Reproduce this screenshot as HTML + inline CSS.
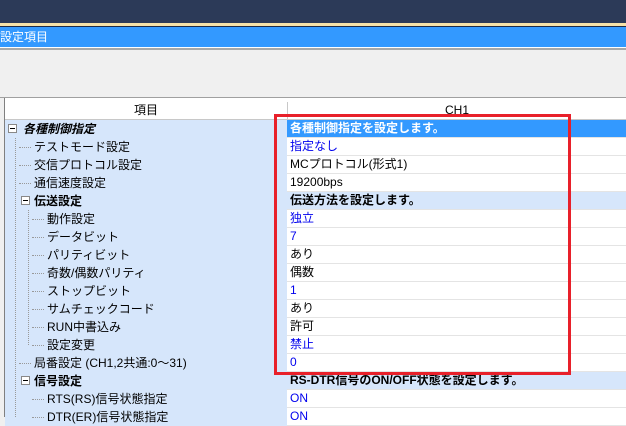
<!DOCTYPE html>
<html><head><meta charset="utf-8"><style>
body{margin:0;width:626px;height:417px;overflow:hidden;background:#f0f0f0;font-family:"Liberation Sans","Noto Sans CJK JP",sans-serif;font-size:12px;position:relative}
.a{position:absolute}
.row{position:absolute;left:5px;width:621px;height:18px}
.l{position:absolute;left:0;width:282px;height:18px;line-height:18px;background:#d6e6fb;white-space:nowrap}
.r{position:absolute;left:282px;width:339px;height:17px;line-height:17px;background:#fff;border-bottom:1px solid #e4e4e4;padding-left:3px;white-space:nowrap}
.g{background:#d6e6fb;font-weight:bold;color:#000}
.s{background:#3399ff;color:#fff;font-weight:bold}
.b{color:#0000ee}
.box{position:absolute;width:7px;height:7px;border:1px solid #888;background:#fff;top:4px}
.box:after{content:"";position:absolute;left:1px;top:3px;width:5px;height:1px;background:#000}
.dot{position:absolute;top:9px;width:12px;border-top:1px dotted #999}
</style></head><body>
<div class="a" style="left:0;top:0;width:626px;height:23px;background:#2c3a58"></div>
<div class="a" style="left:0;top:23px;width:626px;height:3px;background:#f6e2a8"></div>
<div class="a" style="left:0;top:26px;width:626px;height:1px;background:#1e2a44"></div>
<div class="a" style="left:0;top:27px;width:626px;height:20px;background:#3399ff;color:#fff;font-size:12px;line-height:20px">設定項目</div>
<div class="a" style="left:0;top:47px;width:626px;height:1px;background:#fff"></div>
<div class="a" style="left:0;top:48px;width:626px;height:2px;background:#a8a8a8"></div>
<div class="a" style="left:0;top:97px;width:626px;height:1px;background:#a0a0a0"></div>
<div class="a" style="left:4px;top:98px;width:1px;height:319px;background:#808080"></div>
<div class="a" style="left:5px;top:102px;width:282px;height:17px;background:#fff;border-bottom:1px solid #c8c8c8;text-align:center;line-height:17px">項目</div>
<div class="a" style="left:287px;top:102px;width:1px;height:18px;background:#c8c8c8"></div>
<div class="a" style="left:288px;top:102px;width:338px;height:17px;background:#fff;border-bottom:1px solid #c8c8c8;text-align:center;line-height:17px">CH1</div>
<div class="a" style="left:5px;top:98px;width:621px;height:4px;background:#fff"></div>

<div class="row" style="top:120px"><div class="l"><div class="box" style="left:3px"></div><span style="position:absolute;left:18px;font-weight:bold;font-style:italic">各種制御指定</span></div><div class="r s">各種制御指定を設定します。</div></div>
<div class="row" style="top:138px"><div class="l"><div class="dot" style="left:14px"></div><span style="position:absolute;left:29px">テストモード設定</span></div><div class="r b">指定なし</div></div>
<div class="row" style="top:156px"><div class="l"><div class="dot" style="left:14px"></div><span style="position:absolute;left:29px">交信プロトコル設定</span></div><div class="r">MCプロトコル(形式1)</div></div>
<div class="row" style="top:174px"><div class="l"><div class="dot" style="left:14px"></div><span style="position:absolute;left:29px">通信速度設定</span></div><div class="r">19200bps</div></div>
<div class="row" style="top:192px"><div class="l"><div class="box" style="left:16px"></div><span style="position:absolute;left:29px;font-weight:bold">伝送設定</span></div><div class="r g">伝送方法を設定します。</div></div>
<div class="row" style="top:210px"><div class="l"><div class="dot" style="left:27px"></div><span style="position:absolute;left:42px">動作設定</span></div><div class="r b">独立</div></div>
<div class="row" style="top:228px"><div class="l"><div class="dot" style="left:27px"></div><span style="position:absolute;left:42px">データビット</span></div><div class="r b">7</div></div>
<div class="row" style="top:246px"><div class="l"><div class="dot" style="left:27px"></div><span style="position:absolute;left:42px">パリティビット</span></div><div class="r">あり</div></div>
<div class="row" style="top:264px"><div class="l"><div class="dot" style="left:27px"></div><span style="position:absolute;left:42px">奇数/偶数パリティ</span></div><div class="r">偶数</div></div>
<div class="row" style="top:282px"><div class="l"><div class="dot" style="left:27px"></div><span style="position:absolute;left:42px">ストップビット</span></div><div class="r b">1</div></div>
<div class="row" style="top:300px"><div class="l"><div class="dot" style="left:27px"></div><span style="position:absolute;left:42px">サムチェックコード</span></div><div class="r">あり</div></div>
<div class="row" style="top:318px"><div class="l"><div class="dot" style="left:27px"></div><span style="position:absolute;left:42px">RUN中書込み</span></div><div class="r">許可</div></div>
<div class="row" style="top:336px"><div class="l"><div class="dot" style="left:27px"></div><span style="position:absolute;left:42px">設定変更</span></div><div class="r b">禁止</div></div>
<div class="row" style="top:354px"><div class="l"><div class="dot" style="left:14px"></div><span style="position:absolute;left:29px">局番設定 (CH1,2共通:0〜31)</span></div><div class="r b">0</div></div>
<div class="row" style="top:372px"><div class="l"><div class="box" style="left:16px"></div><span style="position:absolute;left:29px;font-weight:bold">信号設定</span></div><div class="r g">RS-DTR信号のON/OFF状態を設定します。</div></div>
<div class="row" style="top:390px"><div class="l"><div class="dot" style="left:27px"></div><span style="position:absolute;left:42px">RTS(RS)信号状態指定</span></div><div class="r b">ON</div></div>
<div class="row" style="top:408px"><div class="l"><div class="dot" style="left:27px"></div><span style="position:absolute;left:42px">DTR(ER)信号状態指定</span></div><div class="r b">ON</div></div>
<div class="a" style="left:15px;top:138px;width:0;height:279px;border-left:1px dotted #999"></div>
<div class="a" style="left:28px;top:210px;width:0;height:135px;border-left:1px dotted #999"></div>

<div class="a" style="left:274px;top:114px;width:291px;height:255px;border:3px solid #e8202a"></div>
</body></html>
